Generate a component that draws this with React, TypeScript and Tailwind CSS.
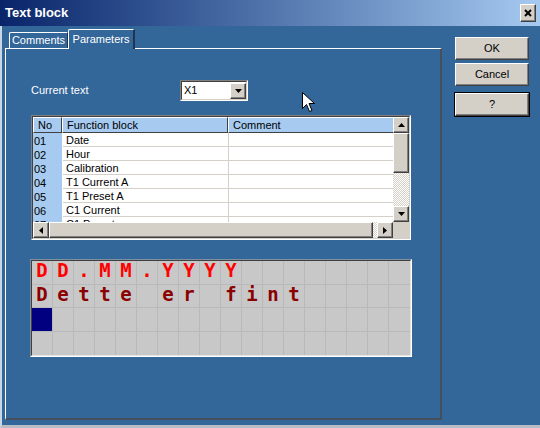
import React from "react";

const rows = [
  ["01", "Date"],
  ["02", "Hour"],
  ["03", "Calibration"],
  ["04", "T1 Current A"],
  ["05", "T1 Preset A"],
  ["06", "C1 Current"],
  ["07", "C1 Preset"],
];

const lcd = ["DD.MM.YYYY", "Dette er fint", "", ""];

const raised =
  "bg-[#d4d0c8] border border-t-white border-l-white border-r-[#404040] border-b-[#404040] shadow-[inset_-1px_-1px_#808080]";

function Arrow({ dir }: { dir: "up" | "down" | "left" | "right" }) {
  const pts = {
    up: "3.5,0 7,4 0,4",
    down: "0,0 7,0 3.5,4",
    left: "4,0 4,7 0,3.5",
    right: "0,0 4,3.5 0,7",
  }[dir];
  const vert = dir === "up" || dir === "down";
  return (
    <div className={`w-[16px] h-[16px] shrink-0 flex items-center justify-center ${raised}`}>
      <svg width={vert ? 7 : 4} height={vert ? 4 : 7}>
        <polygon points={pts} fill="#000" />
      </svg>
    </div>
  );
}

function WinButton({ label, isDefault }: { label: string; isDefault?: boolean }) {
  return (
    <div
      className={`w-[74px] h-[23px] flex items-center justify-center text-[11px] text-black ${raised} ${
        isDefault ? "outline outline-1 outline-black" : ""
      }`}
    >
      {label}
    </div>
  );
}

const dither =
  "bg-[repeating-conic-gradient(#d4d0c8_0%_25%,#ffffff_0%_50%)] bg-[length:2px_2px]";

export default function App() {
  return (
    <div className="relative w-[540px] h-[428px] bg-[#336699] flex flex-col font-['Liberation_Sans',Arial,sans-serif] overflow-hidden">
      {/* title bar */}
      <div className="h-[26px] shrink-0 flex items-center bg-linear-to-r from-[#0a246a] to-[#a6caf0] pl-[5px] pr-[4px]">
        <span className="text-white font-bold text-[13px]">Text block</span>
        <div className={`ml-auto w-[16px] h-[18px] flex items-center justify-center ${raised}`}>
          <svg width="8" height="8" viewBox="0 0 8 8">
            <path d="M1 1 L7 7 M7 1 L1 7" stroke="#000" strokeWidth="2" />
          </svg>
        </div>
      </div>

      {/* body */}
      <div className="flex-1 flex border-l-2 border-l-[#c9d6e6] border-b-[3px] border-b-[#b8bcc4] pl-[3px]">
        {/* tabs + panel */}
        <div className="w-[437px] flex flex-col pt-[3px]">
          <div className="h-[19px] flex items-end pl-[4px] text-white text-[11px]">
            <div className="w-[59px] h-[16px] flex items-center justify-center border-t border-l border-r border-t-white border-l-white border-r-[#1f3550] rounded-tl-[2px]">
              Comments
            </div>
            <div className="relative z-10 -mb-px w-[67px] h-[20px] bg-[#336699] flex items-center justify-center border-t border-l border-r-2 border-t-white border-l-white border-r-[#1f3550] rounded-tl-[2px]">
              Parameters
            </div>
          </div>
          <div className="h-[372px] border-t border-l border-t-white border-l-white border-r-2 border-b-2 border-r-[#46505c] border-b-[#46505c] pl-[25px] pt-[31px] flex flex-col">
            {/* current text row */}
            <div className="flex items-center h-[21px]">
              <span className="w-[149px] text-white text-[11px]">Current text</span>
              <div className="w-[68px] h-[21px] border border-t-[#808080] border-l-[#808080] border-r-white border-b-white">
                <div className="w-full h-full bg-white border border-t-[#404040] border-l-[#404040] border-r-[#d4d0c8] border-b-[#d4d0c8] flex items-center">
                  <span className="flex-1 pl-[2px] text-[11px] text-black">X1</span>
                  <Arrow dir="down" />
                </div>
              </div>
            </div>

            {/* list */}
            <div className="mt-[14px] w-[380px] h-[125px] border border-t-[#808080] border-l-[#808080] border-r-white border-b-white">
              <div className="w-full h-full bg-white border border-t-[#404040] border-l-[#404040] border-r-[#d4d0c8] border-b-[#d4d0c8] flex flex-col text-[11px] text-black">
                <div className="h-[105px] flex">
                  <div className="w-[360px] flex flex-col">
                    <div className="h-[16px] flex bg-[#a6caf0]">
                      <div className="w-[29px] pl-[4px] flex items-center border-t border-l border-t-white border-l-white border-r border-b border-r-[#404040] border-b-[#404040]">
                        No
                      </div>
                      <div className="w-[166px] pl-[4px] flex items-center border-t border-l border-t-white border-l-white border-r border-b border-r-[#404040] border-b-[#404040]">
                        Function block
                      </div>
                      <div className="w-[165px] pl-[4px] flex items-center border-t border-l border-t-white border-l-white border-b border-b-[#404040]">
                        Comment
                      </div>
                    </div>
                    <div className="flex-1 overflow-hidden">
                      {rows.map(([no, name]) => (
                        <div key={no} className="h-[14px] flex">
                          <div className="w-[29px] bg-[#a6caf0] pl-[1px] pt-[2px] flex items-center">{no}</div>
                          <div className="w-[166px] pl-[3px] pt-[2px] ml-[1px] flex items-center border-b border-r border-[#d4d0c8]">
                            {name}
                          </div>
                          <div className="w-[164px] border-b border-[#d4d0c8]" />
                        </div>
                      ))}
                    </div>
                  </div>
                  <div className="w-[16px] flex flex-col">
                    <Arrow dir="up" />
                    <div className={`h-[40px] ${raised}`} />
                    <div className={`flex-1 ${dither}`} />
                    <Arrow dir="down" />
                  </div>
                </div>
                <div className="h-[16px] flex">
                  <div className="w-[360px] flex">
                    <Arrow dir="left" />
                    <div className={`w-[324px] ${raised}`} />
                    <div className={`flex-1 ${dither}`} />
                    <Arrow dir="right" />
                  </div>
                  <div className="w-[16px] bg-[#d4d0c8]" />
                </div>
              </div>
            </div>

            {/* LCD */}
            <div className="mt-[19px] -ml-px w-[382px] h-[98px] border border-t-[#7f8fa0] border-l-[#7f8fa0] border-r-white border-b-white">
              <div className="w-full h-full bg-[#c8c8c8] border border-t-[#404040] border-l-[#404040] border-r-[#e4e4e4] border-b-[#e4e4e4] grid grid-rows-4">
                {lcd.map((line, r) => (
                  <div key={r} className="flex">
                    {Array.from({ length: 18 }).map((_, c) => {
                      const ch = line[c] ?? "";
                      const cursor = r === 2 && c === 0;
                      return (
                        <div
                          key={c}
                          className={`w-[21px] h-full flex items-center justify-center pb-[3px] font-['DejaVu_Sans_Mono',monospace] font-bold text-[19px] leading-none ${
                            c < 17 ? "border-r border-r-[#b9b9b9]" : ""
                          } ${r < 3 ? "border-b border-b-[#b9b9b9]" : ""} ${
                            cursor ? "bg-[#000080]" : ""
                          } ${r === 0 ? "text-[#ff0000]" : "text-[#8b0000]"}`}
                        >
                          {ch.trim() ? ch : ""}
                        </div>
                      );
                    })}
                  </div>
                ))}
              </div>
            </div>
          </div>
        </div>

        {/* buttons */}
        <div className="ml-[13px] pt-[11px] flex flex-col">
          <WinButton label="OK" />
          <div className="mt-[3px]">
            <WinButton label="Cancel" />
          </div>
          <div className="mt-[7px]">
            <WinButton label="?" isDefault />
          </div>
        </div>
      </div>

      {/* mouse pointer */}
      <svg className="absolute left-[302px] top-[92px]" width="13" height="21" viewBox="0 0 13 21">
        <path d="M0.5 0.5 L0.5 16.5 L4.5 12.5 L7.5 19.5 L10 18.5 L7 11.5 L12.5 11.5 Z" fill="#fff" stroke="#000" strokeWidth="1" />
      </svg>
    </div>
  );
}
